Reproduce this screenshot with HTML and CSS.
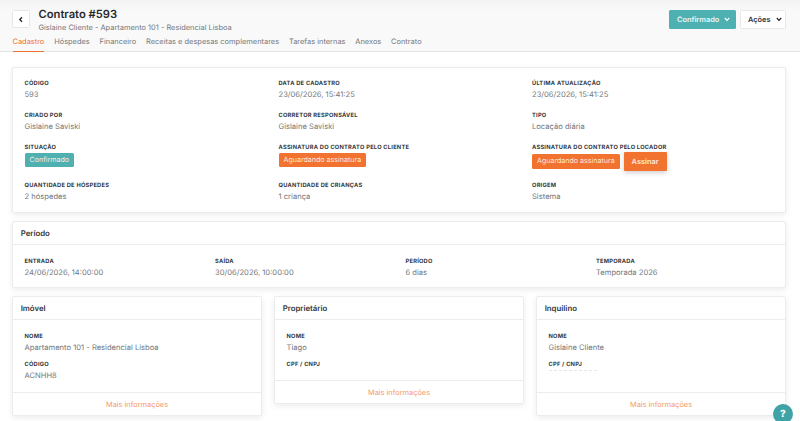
FILE: index.html
```html
<!DOCTYPE html>
<html lang="pt-BR">
<head>
    <meta charset="UTF-8">
    <meta name="viewport" content="width=device-width, initial-scale=1.0">
    <title>Contrato #593</title>
    <link rel="stylesheet" href="styles.css">
</head>
<body>
    <!-- Page header -->
    <div class="page-header">
        <div class="header-top">
            <button class="back-btn">
                <svg width="6" height="7" viewBox="0 0 6 7"><path d="M4 1.2 L1.8 3.5 L4 5.8" fill="none" stroke="#222" stroke-width="1.3"/></svg>
            </button>
            <div class="header-title">
                <h1>Contrato #593</h1>
                <p>Gislaine Cliente - Apartamento 101 - Residencial Lisboa</p>
            </div>
            <div class="header-actions">
                <button class="btn-status">Confirmado
                    <svg width="6" height="5" viewBox="0 0 6 5"><path d="M0.8 1 L3 3.3 L5.2 1" fill="none" stroke="#fff" stroke-width="1.2"/></svg>
                </button>
                <button class="btn-actions">Ações
                    <svg width="6" height="5" viewBox="0 0 6 5"><path d="M0.8 1 L3 3.3 L5.2 1" fill="none" stroke="#222" stroke-width="1.2"/></svg>
                </button>
            </div>
        </div>
        <div class="tabs">
            <a class="tab active">Cadastro</a>
            <a class="tab">Hóspedes</a>
            <a class="tab">Financeiro</a>
            <a class="tab">Receitas e despesas complementares</a>
            <a class="tab">Tarefas internas</a>
            <a class="tab">Anexos</a>
            <a class="tab">Contrato</a>
        </div>
    </div>

    <div class="content">
        <!-- Cadastro -->
        <div class="card">
            <div class="info-grid">
                <div class="field"><label>Código</label><span>593</span></div>
                <div class="field"><label>Data de cadastro</label><span>23/06/2026, 15:41:25</span></div>
                <div class="field"><label>Última atualização</label><span>23/06/2026, 15:41:25</span></div>

                <div class="field"><label>Criado por</label><span>Gislaine Saviski</span></div>
                <div class="field"><label>Corretor responsável</label><span>Gislaine Saviski</span></div>
                <div class="field"><label>Tipo</label><span>Locação diária</span></div>

                <div class="field"><label>Situação</label><span class="badge badge-teal">Confirmado</span></div>
                <div class="field"><label>Assinatura do contrato pelo cliente</label><span class="badge badge-orange">Aguardando assinatura</span></div>
                <div class="field">
                    <label>Assinatura do contrato pelo locador</label>
                    <div class="sign-row">
                        <span class="badge badge-orange">Aguardando assinatura</span>
                        <button class="btn-sign">Assinar</button>
                    </div>
                </div>

                <div class="field"><label>Quantidade de hóspedes</label><span>2 hóspedes</span></div>
                <div class="field"><label>Quantidade de crianças</label><span>1 criança</span></div>
                <div class="field"><label>Origem</label><span>Sistema</span></div>
            </div>
        </div>

        <!-- Periodo -->
        <div class="card">
            <div class="card-title">Período</div>
            <div class="period-grid">
                <div class="field"><label>Entrada</label><span>24/06/2026, 14:00:00</span></div>
                <div class="field"><label>Saída</label><span>30/06/2026, 10:00:00</span></div>
                <div class="field"><label>Período</label><span>6 dias</span></div>
                <div class="field"><label>Temporada</label><span>Temporada 2026</span></div>
            </div>
        </div>

        <!-- Related records -->
        <div class="related">
            <div class="card">
                <div class="card-title">Imóvel</div>
                <div class="related-body">
                    <div class="field"><label>Nome</label><span>Apartamento 101 - Residencial Lisboa</span></div>
                    <div class="field"><label>Código</label><span>ACNHH8</span></div>
                </div>
                <a class="more-link">Mais informações</a>
            </div>
            <div class="card">
                <div class="card-title">Proprietário</div>
                <div class="related-body short">
                    <div class="field"><label>Nome</label><span>Tiago</span></div>
                    <div class="field"><label>CPF / CNPJ</label></div>
                </div>
                <a class="more-link">Mais informações</a>
            </div>
            <div class="card">
                <div class="card-title">Inquilino</div>
                <div class="related-body">
                    <div class="field"><label>Nome</label><span>Gislaine Cliente</span></div>
                    <div class="field"><label>CPF / CNPJ</label><span class="masked"></span></div>
                </div>
                <a class="more-link">Mais informações</a>
            </div>
        </div>
    </div>

    <button class="help-btn">?</button>
</body>
</html>
```

FILE: styles.css
```css
:root {
    --orange: #f2722f;
    --teal: #4fb0b2;
    --label-color: #33363b;
    --value-color: #74777c;
    --line: #ececee;
}

html, body {
    height: 100%;
    overflow: hidden;
}

body {
    font-family: Inter, 'Noto Sans', sans-serif;
    margin: 0;
    background-color: #fff;
    text-rendering: geometricPrecision;
}

button {
    font-family: inherit;
    text-rendering: inherit;
    cursor: pointer;
}

.page-header {
    height: 52px;
    box-sizing: border-box;
    padding: 6px 14px 0 12px;
    background: linear-gradient(#f3f3f3, #f9f9f9 12px);
    border-bottom: 1px solid #e4e4e4;
}

.header-top {
    display: flex;
    align-items: flex-start;
    height: 26px;
}

.back-btn {
    width: 18px;
    height: 18px;
    margin-top: 4px;
    padding: 0;
    display: flex;
    align-items: center;
    justify-content: center;
    background: #fff;
    border: 1px solid #e6e6e6;
    border-radius: 1.5px;
}

.header-title {
    margin-left: 8.5px;
    flex: 1;
}

.header-title h1 {
    margin: 0;
    font-size: 11.2px;
    line-height: 16px;
    font-weight: 600;
    color: #26282c;
}

.header-title p {
    margin: 0.7px 0 0;
    font-size: 7.45px;
    line-height: 10px;
    color: #74777c;
}

.header-actions {
    display: flex;
    gap: 4px;
    margin-top: 4px;
}

.btn-status,
.btn-actions {
    height: 19px;
    display: flex;
    align-items: center;
    gap: 5px;
    font-size: 7.4px;
    font-weight: 600;
    border-radius: 1.5px;
}

.btn-status {
    width: 67px;
    padding: 0 0 0 8px;
    background: var(--teal);
    border: none;
    color: #e9f6f6;
}

.btn-actions {
    width: 46px;
    padding: 0 0 0 7px;
    background: #fff;
    border: 1px solid #e8e8e8;
    color: #33363b;
}

.tabs {
    display: flex;
    gap: 9.8px;
    margin: 4.3px 0 0 0.5px;
}

.tab {
    padding-bottom: 2.7px;
    font-size: 7.45px;
    line-height: 12px;
    color: #74777c;
}

.tab.active {
    color: var(--orange);
    border-bottom: 1px solid var(--orange);
}

.content {
    padding: 15px 14px 0 12px;
}

.card {
    background: #fff;
    border: 1px solid #ececec;
    border-radius: 2px;
    box-shadow: 0 2px 6px rgba(0,0,0,0.08);
    margin-bottom: 8.5px;
}

.info-grid {
    display: grid;
    grid-template-columns: 254px 253.5px 1fr;
    grid-template-rows: 31.75px 31.75px 38.25px 22px;
    padding: 12px 11.5px 8px;
}

.field label {
    display: block;
    font-size: 5.7px;
    line-height: 8px;
    font-weight: 700;
    letter-spacing: 0.25px;
    text-transform: uppercase;
    color: var(--label-color);
}

.field > span {
    display: block;
    margin-top: 1px;
    font-size: 7.6px;
    line-height: 12px;
    color: var(--value-color);
}

.field > span.badge,
.badge {
    display: block;
    width: fit-content;
    height: 14.5px;
    line-height: 14.5px;
    margin-top: 1px;
    padding: 0 5px;
    border-radius: 1.5px;
    font-size: 7.1px;
    color: #fde9dd;
}

.badge-teal {
    background: var(--teal);
    color: #dff2f2;
}

.badge-orange {
    background: var(--orange);
}

.sign-row {
    display: flex;
    align-items: center;
    gap: 4px;
    margin-top: 0.5px;
}

.sign-row .badge {
    margin-top: 0;
}

.btn-sign {
    width: 43px;
    height: 18.5px;
    padding: 0;
    border: none;
    border-radius: 1px;
    background: var(--orange);
    color: #fde9dd;
    font-size: 7.4px;
    font-weight: 600;
    box-shadow: 0 2px 5px rgba(0,0,0,0.18);
}

.card-title {
    height: 22px;
    padding-left: 7.7px;
    display: flex;
    align-items: center;
    font-size: 7.8px;
    font-weight: 600;
    color: #33363b;
    border-bottom: 1px solid var(--line);
}

.period-grid {
    display: grid;
    grid-template-columns: 190.5px 190.5px 190.5px 1fr;
    padding: 12.5px 11.5px 8px;
}

.related {
    display: grid;
    grid-template-columns: repeat(3, 250px);
    gap: 12px;
    align-items: start;
}

.related .card {
    margin-bottom: 0;
}

.related-body {
    box-sizing: border-box;
    height: 71.5px;
    padding: 13px 11.5px 0;
    display: flex;
    flex-direction: column;
    gap: 6.8px;
}

.related-body.short {
    height: 59.5px;
}

.masked {
    height: 1px !important;
    width: 48px;
    margin-top: 1px !important;
    background: repeating-linear-gradient(90deg, #e6e6e6 0 3px, transparent 3px 5px);
}

.more-link {
    display: block;
    height: 22px;
    line-height: 24px;
    text-align: center;
    font-size: 7.4px;
    color: #f49a6a;
    border-top: 1px solid var(--line);
}

.help-btn {
    position: fixed;
    right: 7px;
    bottom: -3px;
    width: 20px;
    height: 20px;
    padding: 0;
    border: none;
    border-radius: 50%;
    background: #3fa3a5;
    color: #fff;
    font-size: 10px;
    font-weight: 800;
}
```
